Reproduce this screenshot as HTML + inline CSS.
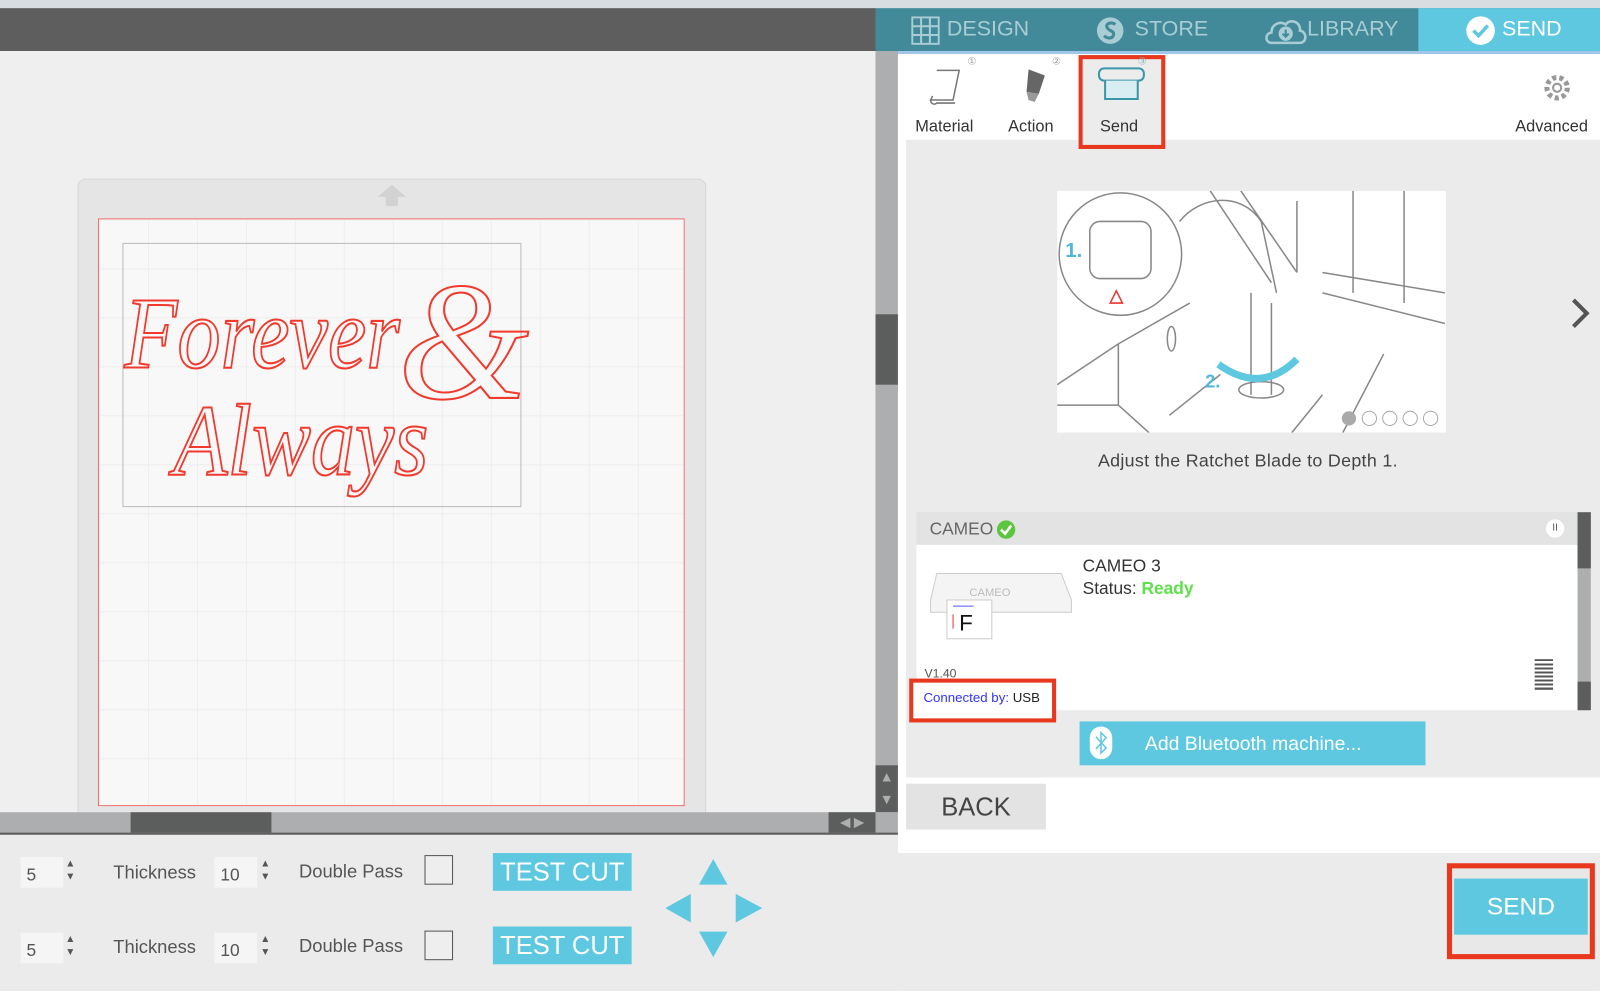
<!DOCTYPE html>
<html><head><meta charset="utf-8"><style>
*{margin:0;padding:0;box-sizing:border-box}
html,body{width:1600px;height:971px;overflow:hidden;background:#ebebeb}
#w{position:absolute;left:0;top:0;width:1568px;height:952px;transform:scale(1.0204);transform-origin:0 0;font-family:"Liberation Sans",sans-serif;color:#444}
.a{position:absolute}
.tab{position:absolute;top:8px;height:42px;color:#a9cdd5;font-size:21px;line-height:42px}
.lbl{font-size:16px;color:#333;position:absolute;top:116px}
.sp{position:absolute;width:42px;height:30px;background:#f5f5f5;font-size:17px;color:#555;padding:8px 0 0 6px}
.arr{position:absolute;font-size:10px;color:#555;line-height:13px}
.tc{position:absolute;width:136px;height:37px;background:#5ec8e0;color:#fff;font-size:25px;text-align:center;line-height:38px}
.cb{position:absolute;width:28px;height:29px;border:1.5px solid #555;background:#eee}
.t{position:absolute;font-size:18px;color:#555}
</style></head><body><div id="w">
<div class="a" style="left:0;top:0;width:1568px;height:8px;background:#d8dde2"></div>
<div class="a" style="left:0;top:8px;width:858px;height:42px;background:#5d5e5d"></div>
<div class="a" style="left:858px;top:8px;width:710px;height:42px;background:#428a99"></div>
<div class="a" style="left:1390px;top:8px;width:178px;height:42px;background:#5ec8e0"></div>
<div class="a" style="left:858px;top:50px;width:710px;height:3px;background:#9fc6e8"></div>
<svg class="a" style="left:893px;top:16px" width="28" height="28"><rect x="1" y="1" width="26" height="26" fill="none" stroke="#a9cdd5" stroke-width="2"/><path d="M1 9.7H27M1 18.3H27M9.7 1V27M18.3 1V27" stroke="#a9cdd5" stroke-width="2"/></svg>
<div class="tab" style="left:928px">DESIGN</div>
<svg class="a" style="left:1074px;top:16px" width="28" height="28"><circle cx="14" cy="14" r="13" fill="#a9cdd5"/><path d="M19 8C15 5 9 7 11 11C13 15 19 14 17 19C15 23 10 21 8 19" stroke="#428a99" stroke-width="3" fill="none"/></svg>
<div class="tab" style="left:1112px">STORE</div>
<svg class="a" style="left:1238px;top:16px" width="44" height="28"><path d="M8 26C2 26 1 17 8 16C8 8 16 4 22 8C26 2 37 5 36 14C43 15 43 26 36 26Z" fill="none" stroke="#a9cdd5" stroke-width="2.5"/><circle cx="22" cy="17" r="7" fill="#a9cdd5"/><path d="M22 13V20M19 17L22 20L25 17" stroke="#428a99" stroke-width="2" fill="none"/></svg>
<div class="tab" style="left:1281px">LIBRARY</div>
<svg class="a" style="left:1436px;top:15px" width="30" height="30"><circle cx="15" cy="15" r="14" fill="#fff"/><path d="M8 15L13 20L22 10" stroke="#5ec8e0" stroke-width="3.5" fill="none"/></svg>
<div class="tab" style="left:1472px;color:#fff">SEND</div>

<div class="a" style="left:0;top:50px;width:858px;height:746px;background:#efefef"></div>
<div class="a" style="left:76px;top:175px;width:616px;height:625px;background:#e5e5e5;border:1px solid #d6d6d6;border-radius:8px 8px 0 0"></div>
<svg class="a" style="left:368px;top:180px" width="32" height="24"><path d="M16 1L30 13H22V22H10V13H2Z" fill="#d2d2d2"/></svg>
<div class="a" style="left:96px;top:214px;width:575px;height:576px;background:#f8f8f8;border:1px solid #f27070;background-image:linear-gradient(#eeeeee 1px,transparent 1px),linear-gradient(90deg,#eeeeee 1px,transparent 1px);background-size:48px 48px"></div>
<div class="a" style="left:120px;top:238px;width:391px;height:259px;border:1px solid #bbb"></div>
<svg class="a" style="left:110px;top:230px" width="410" height="280" font-family="Liberation Serif" font-style="italic">
<text x="12" y="130" font-size="100" textLength="270" lengthAdjust="spacingAndGlyphs" fill="none" stroke="#f03a2e" stroke-width="2">Forever</text>
<text x="280" y="160" font-size="165" fill="none" stroke="#f03a2e" stroke-width="2">&amp;</text>
<text x="60" y="235" font-size="100" textLength="250" lengthAdjust="spacingAndGlyphs" fill="none" stroke="#f03a2e" stroke-width="2">Always</text>
</svg>
<div class="a" style="left:858px;top:50px;width:22px;height:746px;background:#adaeaf"></div>
<div class="a" style="left:858px;top:308px;width:22px;height:69px;background:#5c5e5d"></div>
<div class="a" style="left:858px;top:750px;width:22px;height:46px;background:#5c5e5d;color:#adaeaf;font-size:14px;text-align:center;line-height:22px">▲<br>▼</div>
<div class="a" style="left:0;top:796px;width:880px;height:22px;background:#adaeaf;border-bottom:2px solid #5c5e5d"></div>
<div class="a" style="left:128px;top:796px;width:138px;height:20px;background:#5c5e5d"></div>
<div class="a" style="left:812px;top:796px;width:46px;height:20px;background:#5c5e5d;color:#adaeaf;font-size:13px;line-height:20px;text-align:center">◀ ▶</div>

<div class="a" style="left:880px;top:53px;width:688px;height:783px;background:#fff"></div>
<div class="a" style="left:888px;top:137px;width:680px;height:625px;background:#ebebeb"></div>
<div class="a" style="left:1057px;top:54px;width:85px;height:92px;background:#ececec;border:4px solid #e8391f"></div>
<svg class="a" style="left:910px;top:66px" width="40" height="40"><path d="M8 3H30L24 32H2L4 28" fill="none" stroke="#777" stroke-width="1.5"/><path d="M2 32C2 36 6 37 8 35H26" fill="none" stroke="#777" stroke-width="1.5"/></svg>
<svg class="a" style="left:996px;top:66px" width="34" height="40"><path d="M12 2L28 8L22 26L10 24Z" fill="#666"/><path d="M10 24L22 26L18 34L12 32Z" fill="#999"/></svg>
<svg class="a" style="left:1074px;top:64px" width="50" height="40"><rect x="3" y="3" width="44" height="12" rx="5" fill="none" stroke="#3b97a8" stroke-width="2"/><path d="M9 15V33H41V15" fill="#d8eef2" stroke="#3b97a8" stroke-width="2"/></svg>
<svg class="a" style="left:1510px;top:70px" width="32" height="32"><circle cx="16" cy="16" r="10" fill="none" stroke="#999" stroke-width="5" stroke-dasharray="4 3"/><circle cx="16" cy="16" r="4" fill="#fff" stroke="#999" stroke-width="2"/></svg>
<div class="a" style="left:948px;top:55px;font-size:10px;color:#999">①</div>
<div class="a" style="left:1031px;top:55px;font-size:10px;color:#999">②</div>
<div class="a" style="left:1115px;top:55px;font-size:10px;color:#8bb">③</div>
<div class="lbl" style="left:897px">Material</div>
<div class="lbl" style="left:988px">Action</div>
<div class="lbl" style="left:1078px">Send</div>
<div class="lbl" style="left:1485px">Advanced</div>

<svg class="a" style="left:1036px;top:187px" width="381" height="237"><rect width="381" height="237" fill="#fff"/>
<g fill="none" stroke="#888" stroke-width="1.5">
<path d="M120 30C140 5 180 0 200 30L215 100M150 0L210 90M180 0L235 80M235 10V80M290 0V100M340 0V110M380 100L260 80M260 100L380 130M0 190L60 150L130 110M0 210L60 210L90 237M60 150V210M190 100V200M210 110V200M110 220L160 180M230 237L260 200M280 237L320 160"/>
<circle cx="62" cy="62" r="60" fill="#fff"/>
<rect x="32" y="30" width="60" height="56" rx="10"/>
<ellipse cx="200" cy="195" rx="22" ry="8"/>
<ellipse cx="112" cy="145" rx="4" ry="12"/>
</g>
<text x="8" y="65" font-size="20" font-weight="bold" fill="#4fb8d8">1.</text>
<text x="145" y="193" font-size="18" font-weight="bold" fill="#4fb8d8">2.</text>
<path d="M158 170Q200 200 235 165" stroke="#5ec8e0" stroke-width="7" fill="none"/>
<path d="M58 98L64 110H52Z" fill="none" stroke="#e33" stroke-width="1.5"/>
<circle cx="286" cy="223" r="7" fill="#aaa"/><circle cx="306" cy="223" r="7" fill="#fff" stroke="#aaa"/><circle cx="326" cy="223" r="7" fill="#fff" stroke="#aaa"/><circle cx="346" cy="223" r="7" fill="#fff" stroke="#aaa"/><circle cx="366" cy="223" r="7" fill="#fff" stroke="#aaa"/>
</svg>
<svg class="a" style="left:1538px;top:292px" width="22" height="30"><path d="M4 2L17 15L4 28" stroke="#555" stroke-width="4" fill="none"/></svg>
<div class="a" style="left:1076px;top:441px;font-size:17.5px;color:#444;letter-spacing:0.3px">Adjust the Ratchet Blade to Depth 1.</div>

<div class="a" style="left:898px;top:502px;width:648px;height:32px;background:#e3e3e3"></div>
<div class="a" style="left:911px;top:509px;font-size:17px;color:#666">CAMEO</div>
<svg class="a" style="left:976px;top:509px" width="20" height="20"><circle cx="10" cy="10" r="9" fill="#5cc640"/><path d="M5 10L9 14L15 6" stroke="#fff" stroke-width="2.5" fill="none"/></svg>
<div class="a" style="left:1515px;top:509px;width:18px;height:18px;border-radius:9px;background:#fff;font-size:10px;text-align:center;line-height:18px;color:#555">II</div>
<div class="a" style="left:898px;top:534px;width:648px;height:162px;background:#fff"></div>
<div class="a" style="left:1546px;top:502px;width:13px;height:194px;background:#adaeaf"></div>
<div class="a" style="left:1546px;top:502px;width:13px;height:55px;background:#5c5e5d"></div>
<div class="a" style="left:1546px;top:668px;width:13px;height:28px;background:#5c5e5d"></div>
<svg class="a" style="left:910px;top:558px" width="142" height="72"><path d="M8 4H130L140 30V42H2V30Z" fill="#f4f4f4" stroke="#ccc"/><text x="40" y="26" font-size="11" fill="#bbb">CAMEO</text><rect x="18" y="30" width="44" height="38" fill="#fff" stroke="#ccc"/><text x="30" y="60" font-size="22" fill="#111" font-family="Liberation Sans">F</text><path d="M24 44V58" stroke="#e33"/><path d="M24 36H44" stroke="#55f"/></svg>
<div class="a" style="left:1061px;top:545px;font-size:17px;color:#333">CAMEO 3</div>
<div class="a" style="left:1061px;top:567px;font-size:17px;color:#333">Status: <b style="color:#5ee04a">Ready</b></div>
<div class="a" style="left:906px;top:653px;font-size:12px;color:#555">V1.40</div>
<div class="a" style="left:1504px;top:646px;width:18px;height:30px;background:repeating-linear-gradient(#555 0 2px,#fff 2px 4px)"></div>
<div class="a" style="left:891px;top:665px;width:144px;height:43px;border:4px solid #e8391f;background:#fff"></div>
<div class="a" style="left:905px;top:676px;font-size:13px;color:#33f">Connected by: <span style="color:#222">USB</span></div>
<div class="a" style="left:1058px;top:707px;width:339px;height:43px;background:#5ec8e0"></div>
<svg class="a" style="left:1067px;top:711px" width="24" height="34"><rect x="1" y="1" width="22" height="32" rx="11" fill="#fff"/><path d="M7 11L17 22L12 27V7L17 12L7 23" stroke="#5ec8e0" stroke-width="1.5" fill="none"/></svg>
<div class="a" style="left:1122px;top:719px;font-size:19px;color:#fff">Add Bluetooth machine...</div>
<div class="a" style="left:888px;top:768px;width:137px;height:45px;background:#e3e3e3;font-size:25px;color:#444;text-align:center;line-height:46px">BACK</div>

<div class="a" style="left:0;top:820px;width:880px;height:151px;background:#ebebeb"></div>
<div class="a" style="left:880px;top:836px;width:688px;height:135px;background:#ebebeb"></div>
<div class="sp" style="left:20px;top:840px">5</div><div class="arr" style="left:64px;top:840px">▲<br>▼</div>
<div class="t" style="left:111px;top:845px">Thickness</div>
<div class="sp" style="left:210px;top:840px">10</div><div class="arr" style="left:255px;top:840px">▲<br>▼</div>
<div class="t" style="left:293px;top:844px">Double Pass</div>
<div class="cb" style="left:416px;top:838px"></div>
<div class="tc" style="left:483px;top:836px">TEST CUT</div>
<div class="sp" style="left:20px;top:914px">5</div><div class="arr" style="left:64px;top:914px">▲<br>▼</div>
<div class="t" style="left:111px;top:918px">Thickness</div>
<div class="sp" style="left:210px;top:914px">10</div><div class="arr" style="left:255px;top:914px">▲<br>▼</div>
<div class="t" style="left:293px;top:917px">Double Pass</div>
<div class="cb" style="left:416px;top:912px"></div>
<div class="tc" style="left:483px;top:908px">TEST CUT</div>
<svg class="a" style="left:650px;top:840px" width="100" height="100"><path d="M49 2L63 27H35Z M49 98L35 73H63Z M2 50L27 36V64Z M97 50L71 36V64Z" fill="#5ec8e0"/></svg>
<div class="a" style="left:1418px;top:846px;width:145px;height:94px;border:5px solid #e8391f;background:#e8e8e8"></div>
<div class="a" style="left:1425px;top:861px;width:131px;height:55px;background:#5ec8e0;color:#fff;font-size:24px;text-align:center;line-height:56px">SEND</div>
</div></body></html>
